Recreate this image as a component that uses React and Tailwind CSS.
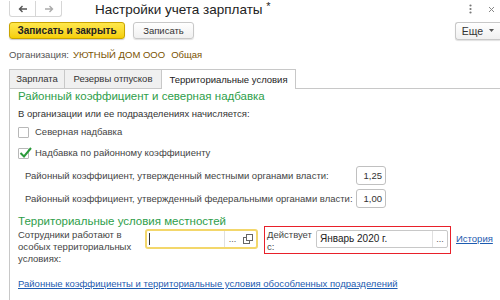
import React from "react";

function Check({ checked }) {
  return (
    <div className="relative w-[11px] h-[11px] border border-[#b8b8b8] bg-white rounded-[1px]">
      {checked && (
        <svg className="absolute left-[0px] top-[-3px]" width="14" height="13" viewBox="0 0 14 13">
          <path d="M1.5 7 L5 10.5 L12 2" fill="none" stroke="#2a9a3a" strokeWidth="2" />
        </svg>
      )}
    </div>
  );
}

export default function App() {
  return (
    <div
      className="relative w-[500px] h-[300px] bg-white overflow-hidden text-[#333] text-[9.5px] leading-[12px]"
      style={{ fontFamily: '"Liberation Sans", Arial, sans-serif' }}
    >
      {/* header row */}
      <div className="flex items-center h-[18px]">
        <div className="ml-[9px] flex w-[53px] h-[16px] border border-[#d6d6d6] border-t-0 rounded-b-[3px] bg-white">
          <div className="flex-1 flex items-center justify-center border-r border-[#d6d6d6] text-[#555]">
            <svg width="10" height="8" viewBox="0 0 10 8"><path d="M9 4H2M4.5 1L1.5 4L4.5 7" fill="none" stroke="#555" strokeWidth="1.4" /></svg>
          </div>
          <div className="flex-1 flex items-center justify-center">
            <svg width="10" height="8" viewBox="0 0 10 8"><path d="M1 4H8M5.5 1L8.5 4L5.5 7" fill="none" stroke="#aaa" strokeWidth="1.4" /></svg>
          </div>
        </div>
        <div className="ml-[33px] mt-[1px] text-[13.5px] leading-[18px] text-[#222]">
          Настройки учета зарплаты <span className="relative top-[-4px] text-[11px]">*</span>
        </div>
        <div className="ml-auto flex items-center mr-[5px] gap-[16px] text-[#777]">
          <svg width="3" height="10" viewBox="0 0 3 10"><circle cx="1.5" cy="1.5" r="1.1" fill="#777" /><circle cx="1.5" cy="5" r="1.1" fill="#777" /><circle cx="1.5" cy="8.5" r="1.1" fill="#777" /></svg>
          <svg width="7" height="7" viewBox="0 0 7 7"><path d="M1 1L6 6M6 1L1 6" stroke="#888" strokeWidth="1" /></svg>
        </div>
      </div>

      {/* buttons row */}
      <div className="flex items-center mt-[4px] h-[17px]">
        <div className="ml-[9px] w-[116px] h-[17px] flex items-center justify-center rounded-[3px] border border-[#c9a400] bg-gradient-to-b from-[#ffe84a] to-[#f5cf00] text-[#222] font-bold text-[10px] shadow-[0_1px_1px_rgba(0,0,0,0.2)]">
          Записать и закрыть
        </div>
        <div className="ml-[8px] w-[61px] h-[17px] flex items-center justify-center rounded-[3px] border border-[#c8c8c8] bg-gradient-to-b from-white to-[#f0f0f0] text-[#333] shadow-[0_1px_1px_rgba(0,0,0,0.12)]">
          Записать
        </div>
        <div className="ml-auto w-[45px] h-[18px] flex items-center justify-center gap-[6px] rounded-l-[3px] border border-r-0 border-[#c8c8c8] bg-gradient-to-b from-white to-[#f0f0f0] text-[#333] text-[10.5px] shadow-[0_1px_1px_rgba(0,0,0,0.12)]">
          Еще
          <svg width="5" height="3" viewBox="0 0 5 3"><path d="M0 0H5L2.5 3Z" fill="#555" /></svg>
        </div>
      </div>

      {/* organization */}
      <div className="mt-[9px] ml-[9px] flex items-center h-[13px]">
        <span className="text-[#555]">Организация:</span>
        <span className="ml-[4px] text-[#7a5200]">УЮТНЫЙ ДОМ ООО</span>
        <span className="ml-[6px] text-[#7a5200]">Общая</span>
      </div>

      {/* tabs */}
      <div className="mt-[8px] flex h-[20px]">
        <div className="w-[9px] border-b border-transparent" />
        <div className="w-[56px] flex items-center justify-center border border-[#c8c8c8] bg-[#f0f0f0] text-[#333]">Зарплата</div>
        <div className="w-[97px] flex items-center justify-center border border-l-0 border-[#c8c8c8] bg-[#f0f0f0] text-[#333]">Резервы отпусков</div>
        <div className="w-[134px] flex items-center justify-center border border-l-0 border-b-0 border-[#c8c8c8] bg-white text-[#222]">Территориальные условия</div>
        <div className="flex-1 border-b border-[#c8c8c8]" />
      </div>

      {/* panel */}
      <div className="ml-[9px] h-[220px] border-l border-[#c8c8c8] pl-[8px]">
        <div className="mt-[0px] text-[11.5px] leading-[15px] text-[#2e9e4a]">Районный коэффициент и северная надбавка</div>
        <div className="mt-[4px]">В организации или ее подразделениях начисляется:</div>
        <div className="mt-[6px] flex items-center gap-[6px] h-[12px]">
          <Check />
          <span className="text-[#444]">Северная надбавка</span>
        </div>
        <div className="mt-[9px] flex items-center gap-[6px] h-[12px]">
          <Check checked />
          <span className="text-[#444]">Надбавка по районному коэффициенту</span>
        </div>
        <div className="mt-[7px] flex items-center h-[19px]">
          <span className="ml-[7px] w-[331px] text-[#444]">Районный коэффициент, утвержденный местными органами власти:</span>
          <div className="w-[30px] h-[19px] flex items-center justify-end pr-[3px] border border-[#c0c0c0] rounded-[3px] text-[#333]">1,25</div>
        </div>
        <div className="mt-[4px] flex items-center h-[19px]">
          <span className="ml-[7px] w-[331px] text-[#444]">Районный коэффициент, утвержденный федеральными органами власти:</span>
          <div className="w-[30px] h-[19px] flex items-center justify-end pr-[3px] border border-[#c0c0c0] rounded-[3px] text-[#333]">1,00</div>
        </div>
        <div className="mt-[6px] text-[11.5px] leading-[15px] text-[#2e9e4a]">Территориальные условия местностей</div>
        <div className="flex items-start">
          <div className="w-[127px] leading-[12px] text-[#444]">Сотрудники работают в особых территориальных условиях:</div>
          <div className="mt-[0px] w-[113px] h-[20px] flex border-2 border-[#f3d76b] rounded-[3px] bg-white">
            <div className="flex-1 flex items-center pl-[2px]"><div className="w-px h-[12px] bg-[#333]" /></div>
            <div className="w-[16px] flex items-center justify-center border-l border-[#e0e0e0] text-[#555] text-[9px] leading-[9px]">...</div>
            <div className="w-[16px] flex items-center justify-center">
              <svg width="10" height="10" viewBox="0 0 10 10"><rect x="0.5" y="3.5" width="6" height="6" fill="white" stroke="#666" /><rect x="3.5" y="0.5" width="6" height="6" fill="white" stroke="#666" /></svg>
            </div>
          </div>
          <div className="ml-[6px] -mt-[3px] w-[187px] h-[28px] border border-[#e8202a] flex items-start pt-[2px] pl-[2px]">
            <div className="w-[48px] leading-[12px] text-[#444]">Действует с:</div>
            <div className="ml-[1px] mt-[1px] w-[132px] h-[18px] flex border border-[#c8c8c8] rounded-[2px]">
              <div className="flex-1 flex items-center pl-[3px] text-[#222] text-[10px]">Январь 2020 г.</div>
              <div className="w-[15px] flex items-center justify-center border-l border-[#e0e0e0] text-[#555] text-[9px] leading-[9px]">...</div>
            </div>
          </div>
          <div className="ml-[5px] mt-[4px] text-[#1d5bb0] underline">История</div>
        </div>
        <div className="mt-[13px] text-[#1d5bb0] underline">Районные коэффициенты и территориальные условия обособленных подразделений</div>
      </div>
    </div>
  );
}
